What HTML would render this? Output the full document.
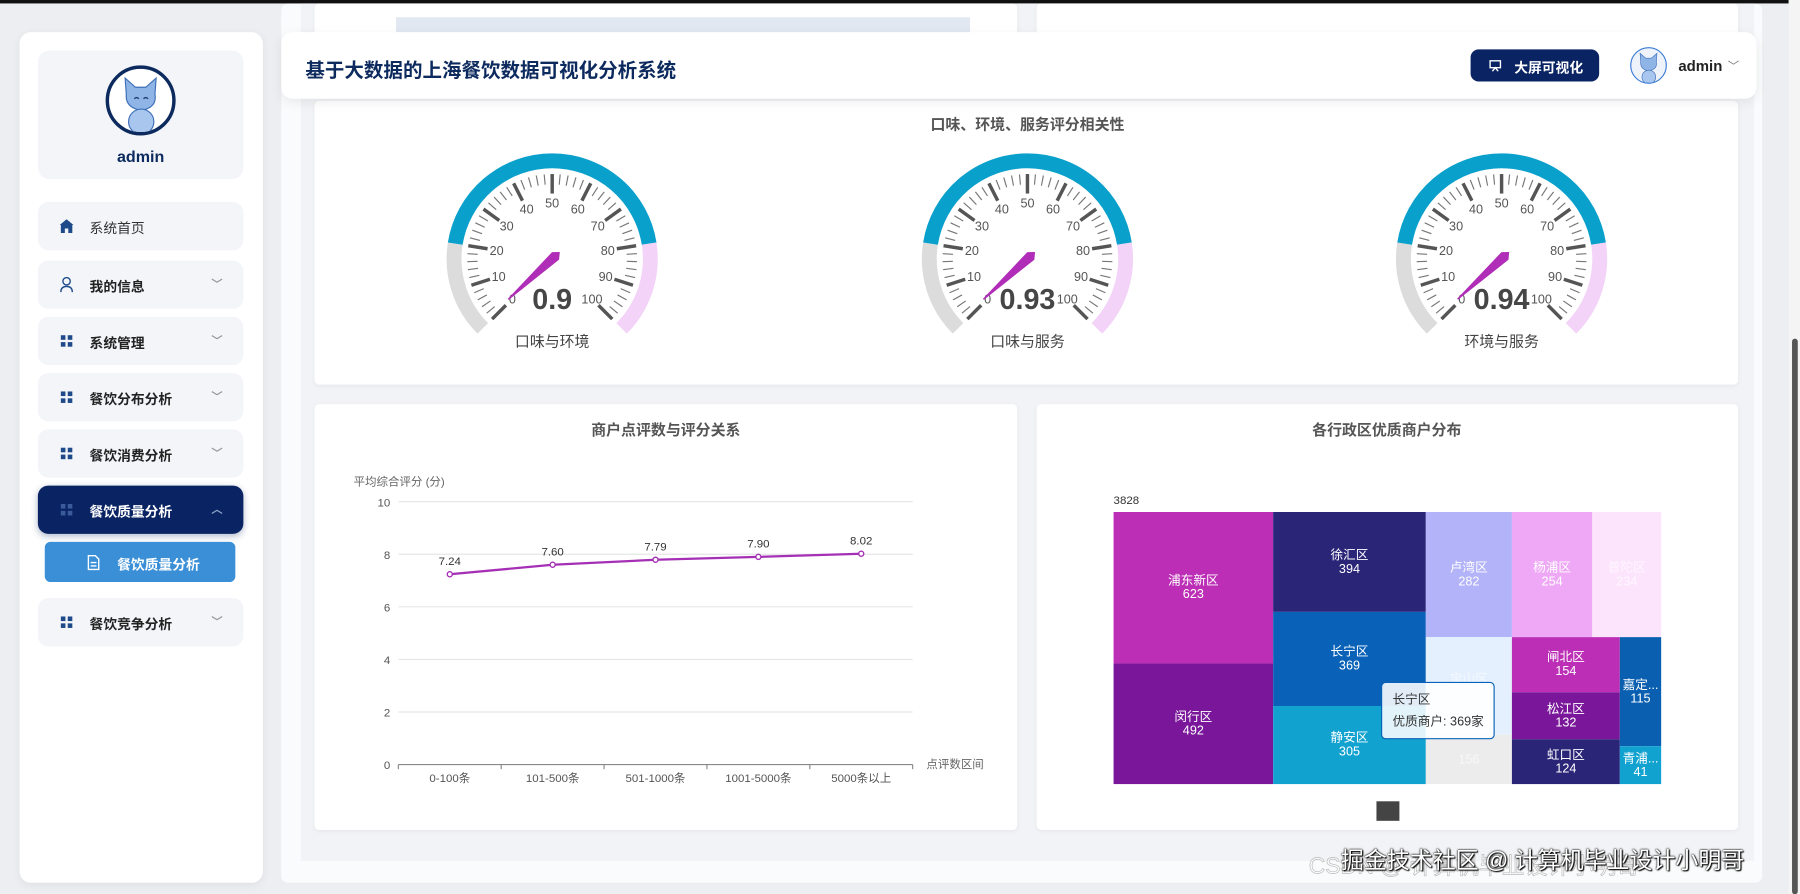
<!DOCTYPE html>
<html><head><meta charset="utf-8">
<style>
html,body{margin:0;padding:0;width:1800px;height:894px;overflow:hidden;background:#eceef2;}
#w{position:absolute;left:0;top:0;width:1568px;height:779px;transform:scale(1.148);transform-origin:0 0;font-family:"Liberation Sans","Noto Sans CJK SC",sans-serif;}
.a{position:absolute;}
.card{position:absolute;background:#fff;border-radius:4px;box-shadow:0 1px 4px rgba(0,0,0,.05);}
.mi{position:absolute;left:33px;width:179px;height:42px;background:#f3f5f9;border-radius:9px;font-size:12px;font-weight:bold;color:#222;}
.mi span.t{position:absolute;left:45px;top:14px;}
.mi .ch{position:absolute;right:18px;top:12px;font-size:10px;color:#999;}
.grid4{position:absolute;left:20px;top:16px;width:10px;height:10px;}
.grid4 i{position:absolute;width:4px;height:4px;background:#1e4a8a;}
.ttl{position:absolute;font-size:13px;font-weight:bold;color:#555;transform:translateX(-50%);white-space:nowrap;}
.tm{position:absolute;color:#fff;font-size:11px;text-align:center;display:flex;align-items:center;justify-content:center;line-height:12px;overflow:hidden;}
</style></head><body>
<div id="w">
<div class="a" style="left:0;top:0;width:1568px;height:3px;background:#111"></div>
<!-- main panels -->
<div class="a" style="left:245px;top:3px;width:1290px;height:766px;background:#fafbfc;border-radius:6px"></div>
<div class="a" style="left:262px;top:3px;width:1266px;height:747px;background:#f2f3f6"></div>
<div class="card" style="left:274px;top:3px;width:612px;height:40px"></div>
<div class="a" style="left:345px;top:15px;width:500px;height:14px;background:#e1e8f1"></div>
<div class="card" style="left:903px;top:3px;width:611px;height:40px"></div>
<div class="a" style="left:1558px;top:0;width:10px;height:779px;background:#f4f4f4"></div>
<div class="a" style="left:1561px;top:295px;width:5px;height:484px;background:#555;border-radius:3px"></div>

<!-- sidebar -->
<div class="a" style="left:17px;top:28px;width:212px;height:741px;background:#fff;border-radius:10px;box-shadow:0 2px 8px rgba(0,0,0,.06)"></div>
<div class="a" style="left:33px;top:44px;width:179px;height:112px;background:#f3f5f9;border-radius:10px"></div>
<div class="a" style="left:92px;top:57px;width:55px;height:55px;border:3px solid #0d2a5e;border-radius:50%;background:#fff;overflow:hidden">
<svg width="55" height="55" viewBox="0 0 55 55"><path d="M15 22 L14 8 L23 16 L32 16 L41 8 L40 22 Q42 34 28 36 Q14 34 15 22Z" fill="#8fb4e6" stroke="#3d6fb8" stroke-width="1"/><ellipse cx="28" cy="46" rx="11" ry="11" fill="#a9c6ee" stroke="#3d6fb8" stroke-width="1"/><path d="M22 26 q2 -2 4 0 M30 26 q2 -2 4 0" stroke="#1d3c70" fill="none" stroke-width="1.2"/></svg></div>
<div class="a" style="left:33px;top:128px;width:179px;text-align:center;font-size:14px;font-weight:bold;color:#0d2a5e">admin</div>

<div class="mi" style="top:176px"><svg class="a" style="left:19px;top:15px" width="12" height="12" viewBox="0 0 12 12"><path d="M6 0 L12 5 L11 5 L11 12 L7.5 12 L7.5 8 L4.5 8 L4.5 12 L1 12 L1 5 L0 5Z" fill="#1e4a8a"/></svg><span class="t" style="font-weight:normal;color:#333">系统首页</span></div>
<div class="mi" style="top:227px"><svg class="a" style="left:19px;top:14px" width="12" height="14" viewBox="0 0 12 14"><circle cx="6" cy="4" r="3.2" fill="none" stroke="#1e4a8a" stroke-width="1.2"/><path d="M1 13.5 Q1 8.5 6 8.5 Q11 8.5 11 13.5" fill="none" stroke="#1e4a8a" stroke-width="1.2"/></svg><span class="t">我的信息</span><span class="ch">﹀</span></div>
<div class="mi" style="top:276px"><div class="grid4"><i style="left:0;top:0"></i><i style="left:6px;top:0"></i><i style="left:0;top:6px"></i><i style="left:6px;top:6px"></i></div><span class="t">系统管理</span><span class="ch">﹀</span></div>
<div class="mi" style="top:325px"><div class="grid4"><i style="left:0;top:0"></i><i style="left:6px;top:0"></i><i style="left:0;top:6px"></i><i style="left:6px;top:6px"></i></div><span class="t">餐饮分布分析</span><span class="ch">﹀</span></div>
<div class="mi" style="top:374px"><div class="grid4"><i style="left:0;top:0"></i><i style="left:6px;top:0"></i><i style="left:0;top:6px"></i><i style="left:6px;top:6px"></i></div><span class="t">餐饮消费分析</span><span class="ch">﹀</span></div>
<div class="mi" style="top:423px;background:#0a2463;color:#fff;box-shadow:0 2px 6px rgba(10,36,99,.3)"><div class="grid4"><i style="left:0;top:0;background:#3a5a9a"></i><i style="left:6px;top:0;background:#3a5a9a"></i><i style="left:0;top:6px;background:#3a5a9a"></i><i style="left:6px;top:6px;background:#3a5a9a"></i></div><span class="t">餐饮质量分析</span><span class="ch" style="color:#8fa3c8">︿</span></div>
<div class="a" style="left:39px;top:472px;width:166px;height:35px;background:#3a8fd6;border-radius:5px;color:#fff;font-size:12px;font-weight:bold">
<svg class="a" style="left:37px;top:11px" width="11" height="14" viewBox="0 0 11 14"><path d="M1 1 H7 L10 4 V13 H1Z" fill="none" stroke="#fff" stroke-width="1.2"/><path d="M3 7 H8 M3 10 H8" stroke="#fff" stroke-width="1.2"/></svg>
<span class="a" style="left:63px;top:11px">餐饮质量分析</span></div>
<div class="mi" style="top:521px"><div class="grid4"><i style="left:0;top:0"></i><i style="left:6px;top:0"></i><i style="left:0;top:6px"></i><i style="left:6px;top:6px"></i></div><span class="t">餐饮竞争分析</span><span class="ch">﹀</span></div>

<!-- gauge card -->
<div class="card" style="left:274px;top:88px;width:1240px;height:247px"></div>
<div class="ttl" style="left:895px;top:98px">口味、环境、服务评分相关性</div>
<svg class="a" style="left:274px;top:88px" width="1240" height="247" id="gs"></svg>

<!-- header -->
<div class="a" style="left:245px;top:28px;width:1285px;height:58px;background:#fff;border-radius:10px;box-shadow:0 3px 10px rgba(0,0,0,.07)"></div>
<div class="a" style="left:266px;top:47px;font-size:17px;font-weight:bold;color:#0d2a5e">基于大数据的上海餐饮数据可视化分析系统</div>
<div class="a" style="left:1281px;top:43px;width:112px;height:28px;background:#0a2463;border-radius:7px;color:#fff;font-size:12px;font-weight:bold">
<svg class="a" style="left:16px;top:9px" width="11" height="11" viewBox="0 0 11 11"><path d="M1 1 H10 V7 H1Z M3 10 L5.5 7 L8 10" fill="none" stroke="#fff" stroke-width="1.2"/></svg>
<span class="a" style="left:38px;top:7px">大屏可视化</span></div>
<div class="a" style="left:1420px;top:41px;width:30px;height:30px;border:1.5px solid #3a7bd5;border-radius:50%;background:#eef3fb;overflow:hidden"><svg width="30" height="30" viewBox="0 0 55 55"><path d="M15 22 L14 8 L23 16 L32 16 L41 8 L40 22 Q42 34 28 36 Q14 34 15 22Z" fill="#8fb4e6" stroke="#3d6fb8"/><ellipse cx="28" cy="46" rx="11" ry="11" fill="#a9c6ee" stroke="#3d6fb8"/></svg></div>
<div class="a" style="left:1462px;top:50px;font-size:13px;font-weight:bold;color:#222">admin</div>
<div class="a" style="left:1505px;top:49px;font-size:10px;color:#777">﹀</div>

<!-- line chart card -->
<div class="card" style="left:274px;top:352px;width:612px;height:371px"></div>
<div class="ttl" style="left:580px;top:364px">商户点评数与评分关系</div>
<svg class="a" style="left:274px;top:352px" width="612" height="371" id="lc" font-family="Liberation Sans, Noto Sans CJK SC, sans-serif"></svg>

<!-- treemap card -->
<div class="card" style="left:903px;top:352px;width:611px;height:371px"></div>
<div class="ttl" style="left:1208px;top:364px">各行政区优质商户分布</div>
<div class="a" style="left:970px;top:431px;font-size:10px;color:#333">3828</div>
<div class="tm" style="left:970px;top:446px;width:139px;height:132px;background:#bb2eb5">浦东新区<br>623</div>
<div class="tm" style="left:970px;top:578px;width:139px;height:105px;background:#7a169a">闵行区<br>492</div>
<div class="tm" style="left:1109px;top:446px;width:133px;height:87px;background:#2b2578">徐汇区<br>394</div>
<div class="tm" style="left:1109px;top:533px;width:133px;height:82px;background:#0a62b8">长宁区<br>369</div>
<div class="tm" style="left:1109px;top:615px;width:133px;height:68px;background:#11a2d0">静安区<br>305</div>
<div class="tm" style="left:1242px;top:446px;width:75px;height:109px;background:#b3b3fa">卢湾区<br>282</div>
<div class="tm" style="left:1317px;top:446px;width:70px;height:109px;background:#eea8f5">杨浦区<br>254</div>
<div class="tm" style="left:1387px;top:446px;width:60px;height:109px;background:#fbe4fc;color:#fff6ff">普陀区<br>234</div>
<div class="tm" style="left:1242px;top:555px;width:75px;height:85px;background:#e4f0fd;color:#f4f9ff">宝山区<br>170</div>
<div class="tm" style="left:1242px;top:640px;width:75px;height:43px;background:#ececec;color:#f8f8f8">156</div>
<div class="tm" style="left:1317px;top:555px;width:94px;height:48px;background:#bb2eb5">闸北区<br>154</div>
<div class="tm" style="left:1317px;top:603px;width:94px;height:41px;background:#7a169a">松江区<br>132</div>
<div class="tm" style="left:1317px;top:644px;width:94px;height:39px;background:#2b2578">虹口区<br>124</div>
<div class="tm" style="left:1411px;top:555px;width:36px;height:95px;background:#0a5fb0">嘉定...<br>115</div>
<div class="tm" style="left:1411px;top:650px;width:36px;height:33px;background:#11a2d0">青浦...<br>41</div>
<div class="a" style="left:1203px;top:594px;width:99px;height:50px;background:rgba(255,255,255,.88);border:1px solid #0a62b8;border-radius:4px;font-size:11px;color:#333;line-height:19px;padding:6px 0 0 9px;box-sizing:border-box">长宁区<br>优质商户: 369家</div>
<div class="a" style="left:1199px;top:698px;width:20px;height:17px;background:#444"></div>

<!-- watermark -->
<div class="a" style="left:1140px;top:738px;font-size:20px;color:rgba(255,255,255,.6);-webkit-text-stroke:0.6px #bbb;white-space:nowrap">CSDN @ 计算机毕业设计小明哥</div>
<div class="a" style="left:1168px;top:733px;font-size:20px;color:#fff;white-space:nowrap;text-shadow:0 0 2px #000,0 0 1px #000,1px 1px 1px #000">掘金技术社区 @ 计算机毕业设计小明哥</div>
</div>
<script>
var NS="http://www.w3.org/2000/svg";
function el(p,t,a,txt){var e=document.createElementNS(NS,t);for(var k in a)e.setAttribute(k,a[k]);if(txt!==undefined)e.textContent=txt;p.appendChild(e);return e;}
var gs=document.getElementById('gs');
function pt(cx,cy,r,a){return [cx+r*Math.cos(a),cy-r*Math.sin(a)];}
function arc(cx,cy,r,a0,a1){var p0=pt(cx,cy,r,a0),p1=pt(cx,cy,r,a1);var large=(a0-a1)>Math.PI?1:0;return "M"+p0[0]+" "+p0[1]+" A"+r+" "+r+" 0 "+large+" 1 "+p1[0]+" "+p1[1];}
var gd=[[207,"0.9","口味与环境"],[621,"0.93","口味与服务"],[1034,"0.94","环境与服务"]];
gd.forEach(function(g){
 var cx=g[0],cy=137.6,R=85.5,W=13;
 var A0=225*Math.PI/180,SW=270*Math.PI/180;
 function ang(f){return A0-SW*f;}
 [[0,0.2,"#dcdcdc"],[0.2,0.8,"#0aa0cc"],[0.8,1,"#f3d4f8"]].forEach(function(s){
  el(gs,'path',{d:arc(cx,cy,R,ang(s[0]),ang(s[1])),fill:'none',stroke:s[2],'stroke-width':W});
 });
 for(var i=0;i<=50;i++){
  var a=ang(i/50),maj=(i%5==0);
  var p0=pt(cx,cy,74,a),p1=pt(cx,cy,maj?57:65,a);
  el(gs,'line',{x1:p0[0],y1:p0[1],x2:p1[0],y2:p1[1],stroke:maj?'#555':'#777','stroke-width':maj?3:1});
  if(maj){var q=pt(cx,cy,49,a);el(gs,'text',{x:q[0],y:q[1]+4,'font-size':11,fill:'#555','text-anchor':'middle','font-family':'Liberation Sans, sans-serif'},String(i*2));}
 }
 var v=parseFloat(g[1])/100,a=ang(v);
 var ux=Math.cos(a),uy=-Math.sin(a),nx=-uy,ny=ux;
 function P(l,w){return (cx+ux*l+nx*w)+","+(cy+uy*l+ny*w);}
 el(gs,'polygon',{points:[P(-9,0),P(-4,4.5),P(52,0.6),P(52,-0.6),P(-4,-4.5)].join(" "),fill:'#b02db8'});
 el(gs,'text',{x:cx,y:181,'font-size':25,'font-weight':'bold',fill:'#464646','text-anchor':'middle','font-family':'Liberation Sans, sans-serif'},g[1]);
 el(gs,'text',{x:cx,y:214,'font-size':13,fill:'#444','text-anchor':'middle','font-family':'Liberation Sans, Noto Sans CJK SC, sans-serif'},g[2]);
});
var lc=document.getElementById('lc');
var ox=274,oy=352;
function Y(v){return 666-22.9*v-oy;}
for(var v=0;v<=10;v+=2){
 el(lc,'line',{x1:347-ox,x2:795-ox,y1:Y(v),y2:Y(v),stroke:v==0?'#888':'#e6e6e6','stroke-width':1});
 el(lc,'text',{x:340-ox,y:Y(v)+4,'font-size':10,fill:'#555','text-anchor':'end'},String(v));
}
el(lc,'text',{x:308-ox,y:423-oy,'font-size':10,fill:'#666'},"平均综合评分 (分)");
el(lc,'text',{x:807-ox,y:669-oy,'font-size':10,fill:'#666'},"点评数区间");
var cats=["0-100条","101-500条","501-1000条","1001-5000条","5000条以上"],vals=[7.24,7.60,7.79,7.90,8.02];
var pts=[];
for(var i=0;i<=5;i++){var x=347+89.6*i-ox;el(lc,'line',{x1:x,x2:x,y1:Y(0),y2:Y(0)+4,stroke:'#888'});}
for(var i=0;i<5;i++){var x=391.8+89.6*i-ox;pts.push(x+","+Y(vals[i]));
 el(lc,'text',{x:x,y:681-oy,'font-size':10,fill:'#555','text-anchor':'middle'},cats[i]);
}
el(lc,'polyline',{points:pts.join(" "),fill:'none',stroke:'#a52fb5','stroke-width':2});
for(var i=0;i<5;i++){var x=391.8+89.6*i-ox;
 el(lc,'circle',{cx:x,cy:Y(vals[i]),r:2.2,fill:'#fff',stroke:'#a52fb5','stroke-width':1.2});
 el(lc,'text',{x:x,y:Y(vals[i])-8,'font-size':10,fill:'#333','text-anchor':'middle'},vals[i].toFixed(2));
}
</script>
</body></html>
